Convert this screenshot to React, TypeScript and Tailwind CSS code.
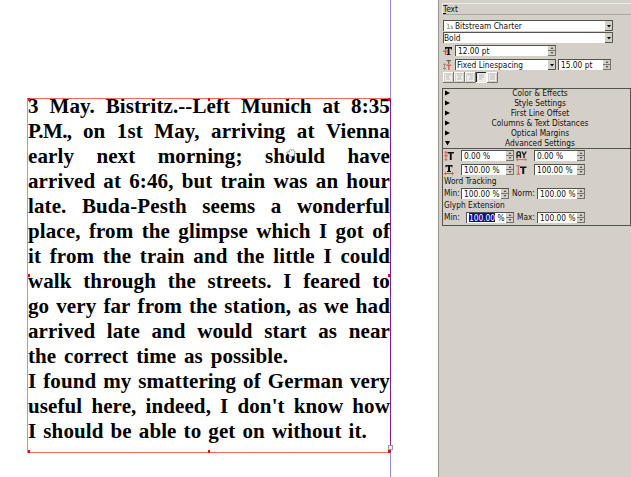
import React from "react";

const lines: [string, number][] = [
  ["3 May. Bistritz.--Left Munich at 8:35", 362],
  ["P.M., on 1st May, arriving at Vienna", 362],
  ["early next morning; should have", 362],
  ["arrived at 6:46, but train was an hour", 362],
  ["late. Buda-Pesth seems a wonderful", 362],
  ["place, from the glimpse which I got of", 362],
  ["it from the train and the little I could", 362],
  ["walk through the streets. I feared to", 362],
  ["go very far from the station, as we had", 362],
  ["arrived late and would start as near", 362],
  ["the correct time as possible.", 260],
  ["I found my smattering of German very", 362],
  ["useful here, indeed, I don't know how", 362],
  ["I should be able to get on without it.", 339],
];

const sections = [
  "Color & Effects",
  "Style Settings",
  "First Line Offset",
  "Columns & Text Distances",
  "Optical Margins",
  "Advanced Settings",
];

function Handle({ className }: { className: string }) {
  return <i className={`absolute h-[3px] w-[2px] bg-[#f00] ${className}`} />;
}

function Spin({ value, className = "", selected = false }: { value: string; className?: string; selected?: boolean }) {
  return (
    <div className={`flex h-[11px] shrink-0 border-t border-l border-[#55534f] bg-white leading-[10px] ${className}`}>
      <span className="w-0 grow pl-[2px] whitespace-pre">
        {selected ? (
          <>
            <span className="inline-block h-[9px] bg-[#10108a] leading-[10px] text-white">100.00</span> %
          </>
        ) : (
          value
        )}
      </span>
      <svg width="8" height="10" viewBox="0 0 8 10" className="shrink-0">
        <path fill="#d4d0c8" d="M0 0h8v10H0z" />
        <path stroke="#77746e" d="M0 4.5h8M0 9.5h8M7.5 0v10" />
        <path fill="#555" d="M2.5 3h3L4 1zM2.5 6h3L4 8z" />
      </svg>
    </div>
  );
}

function Combo({ children, className = "" }: { children: React.ReactNode; className?: string }) {
  return (
    <div className={`flex h-[11px] shrink-0 border-t border-l border-[#55534f] bg-white leading-[10px] ${className}`}>
      <span className="flex grow whitespace-pre">{children}</span>
      <svg width="8" height="10" viewBox="0 0 8 10" className="shrink-0">
        <path fill="#d4d0c8" d="M0 0h8v10H0z" />
        <path stroke="#55534f" fill="none" d="M0 9.5h7.5V0" />
        <path fill="#000" d="M2 4h4L4 6.5z" />
      </svg>
    </div>
  );
}

const T = "M0 0h7v2.4H6L5.5 1.4H4.4V7h.9v1H1.8V7h.9V1.4H1.5L1 2.4H0z";

function FontSizeIcon() {
  return (
    <svg width="10" height="10" viewBox="0 0 10 10">
      <path d={T} transform="translate(2 1)" fill="#111" />
      <path d="M0 4.5h5v1.2H3.2V9H1.9V5.7H0z" fill="#e04a3c" />
    </svg>
  );
}

function LineSpacingIcon() {
  return (
    <svg width="10" height="10" viewBox="0 0 10 10">
      <path d="M3.5.7H8M5.8.7V4" stroke="#555" fill="none" />
      <path d="M3.5 5.2H8M5.8 5.2V10" stroke="#e04a3c" strokeWidth="1.2" fill="none" />
      <path d="M1.5 4v5M0 5.3 1.5 3.6 3 5.3M0 8l1.5 1.6L3 8" stroke="#777" strokeWidth=".7" fill="none" />
    </svg>
  );
}

function BaselineIcon() {
  return (
    <svg width="10" height="10" viewBox="0 0 10 10">
      <path d="M3.5 1H10v1.6H7.7V9H5.8V2.6H3.5z" fill="#111" />
      <path d="M0 4.8h4M2 .5v9M.7 2 2 .5 3.3 2M.7 8 2 9.5 3.3 8" stroke="#e04a3c" strokeWidth=".9" fill="none" />
    </svg>
  );
}

function WidthIcon() {
  return (
    <svg width="10" height="10" viewBox="0 0 10 10">
      <path d="M1.5 0h7v2.2h-1v-.7H6V6h1v1H3V6h1V1.5H2.5v.7h-1z" fill="#111" />
      <path d="M.5 8.5h9M2 7.2.6 8.5 2 9.8M8 7.2l1.4 1.3L8 9.8" stroke="#e04a3c" strokeWidth=".9" fill="none" />
    </svg>
  );
}

function TrackingIcon() {
  return (
    <svg width="11" height="10" viewBox="0 0 11 10">
      <path d="M1 7V2.2Q1 .7 2.7.7t1.7 1.5V7M1 4.5h3.4M6 .5l2 3.7L10.2.5M8 4v3" stroke="#222" strokeWidth="1.4" fill="none" />
      <path d="M.5 8.6h9.8M2 7.3.6 8.6 2 9.9M9 7.3l1.3 1.3L9 9.9" stroke="#e04a3c" strokeWidth=".8" fill="none" />
    </svg>
  );
}

function HeightIcon() {
  return (
    <svg width="11" height="10" viewBox="0 0 11 10">
      <path d="M4 1.5h6.5v1.6H8.2V9H6.3V3.1H4z" fill="#111" />
      <path d="M.5.8h3.6M.5 9.2h3.6M2.3.8v8.4" stroke="#e04a3c" strokeWidth=".9" fill="none" />
    </svg>
  );
}

function AlignButton({ kind, active = false }: { kind: number; active?: boolean }) {
  const paths = [
    "M3 3h5M3 5h3M3 7h4",
    "M3 3h5M4 5h3M3 7h5",
    "M3 3h5M5 5h3M4 7h4",
    "M3 3h5M3 5h5M3 7h3",
    "M3 3h5M3 5h5M3 7h5",
  ];
  return (
    <svg width="11" height="11" viewBox="0 0 11 11">
      <path fill={active ? "#e9e7e3" : "#d4d0c8"} d="M0 0h11v11H0z" />
      <path stroke={active ? "#222" : "#fff"} fill="none" d="M.5 11V.5H11" />
      <path stroke={active ? "#fff" : "#77746e"} fill="none" d="M10.5 0v10.5H0" />
      <path fill="#efeeeb" d="M2 2h7v7H2z" />
      <path d={paths[kind]} stroke="#aaa9a5" strokeWidth=".8" />
    </svg>
  );
}

export default function App() {
  return (
    <div className="flex h-[477px] w-[631px] overflow-hidden bg-white">
      <main className="relative w-[438px] shrink-0 pt-[94px] pl-[28px]">
        <article className="font-['Liberation_Serif',serif] text-[21px] leading-[25px] font-bold tracking-[0.1px] text-black">
          {lines.map(([line, width]) => (
            <p key={line} className="flex h-[25px] justify-between whitespace-nowrap" style={{ width }}>
              {line.split(" ").map((w, i) => (
                <span key={i} className={w === "P.M.," ? "tracking-[-0.6px]" : ""}>{w}</span>
              ))}
            </p>
          ))}
        </article>
        <i className="absolute top-0 left-[390px] h-full w-px bg-[#8c8cf5]" />
        <div className="absolute top-[98px] left-[27px] h-[355px] w-[364px] border border-[#ff6464] border-r-[#7c2090] border-l-[#e08a8a]">
          <Handle className="top-[-1px] left-0" />
          <Handle className="top-[-1px] left-[180px]" />
          <Handle className="top-[-1px] right-0" />
          <Handle className="top-[175px] left-0" />
          <Handle className="top-[175px] right-0" />
          <Handle className="bottom-[-1px] left-0" />
          <Handle className="bottom-[-1px] left-[180px]" />
          <Handle className="right-0 bottom-[-1px]" />
        </div>
        <i className="absolute top-[445px] left-[388px] size-[5px] border border-[#999] bg-[#eee]" />
        <svg className="absolute top-[148px] left-[286px]" width="10" height="10" viewBox="0 0 10 10">
          <path d="M3 7 1 4.5 2 3.5l1 1V2.5l1.5-1 1 .5L7 1.6l1 .8.8 1V6L7.5 8.5h-3z" fill="#fff" stroke="#444" strokeWidth=".8" strokeDasharray="1.5 .6" />
        </svg>
      </main>

      <aside className="flex w-[193px] shrink-0 flex-col border-l border-[#98958f] bg-[#d4d0c8] pl-[3px] font-['DejaVu_Sans_Condensed','DejaVu_Sans',sans-serif] text-[8.3px] text-[#111]">
        <header className="mt-[3px] h-[12px] border-t border-b border-l border-[#eeece8] border-b-[#aaa7a0] leading-[11px]">
          <span className="underline decoration-[0.5px] underline-offset-1">T</span>ext
        </header>

        <section className="flex h-[73px] flex-col pt-[5px] pl-px">
          <Combo className="w-[170px]">
            <svg width="11" height="10" viewBox="0 0 11 10">
              <path d="M3 3h1.3v4.5M3 7.5h3M8.5 5H7v1.2h1.5v1.5H6.7" stroke="#888" strokeWidth=".8" fill="none" />
            </svg>
            Bitstream Charter
          </Combo>
          <Combo className="mt-px w-[170px]">Bold</Combo>
          <div className="mt-[2px] flex h-[11px] items-center gap-[2px]">
            <FontSizeIcon />
            <Spin value="12.00 pt" className="w-[101px]" />
          </div>
          <div className="mt-[3px] flex h-[11px] items-center gap-[2px]">
            <LineSpacingIcon />
            <Combo className="w-[101px]"><span className="pl-px">Fixed Linespacing</span></Combo>
            <Spin value="15.00 pt" className="w-[53px]" />
          </div>
          <div className="mt-[2px] flex">
            {[0, 1, 2, 3, 4].map((k) => <AlignButton key={k} kind={k} active={k === 3} />)}
          </div>
        </section>

        <section className="h-[138px] w-[189px] border border-[#55534f]">
          <div className="mt-[-1px]">
            {sections.map((name, i) => (
              <h3 key={name} className="flex h-[10px] items-center pl-[2px] leading-[10px] font-normal">
                <svg width="5" height="6" viewBox="0 0 5 6" className="shrink-0">
                  <path d={i === 5 ? "M0 1h5L2.5 5.5z" : "M0 .5 5 3 0 5.5z"} fill="#000" />
                </svg>
                <span className="grow text-center">{name}</span>
              </h3>
            ))}
          </div>
          <div className="flex flex-col border-t border-[#55534f] pl-px">
            <div className="mt-px flex items-center">
              <BaselineIcon />
              <Spin value="0.00 %" className="ml-[7px] w-[53px]" />
              <span className="ml-[2px] flex w-[18px]"><TrackingIcon /></span>
              <Spin value="0.00 %" className="w-[51px]" />
            </div>
            <div className="mt-[3px] flex items-center">
              <WidthIcon />
              <Spin value="100.00 %" className="ml-[7px] w-[53px]" />
              <span className="ml-[2px] flex w-[18px]"><HeightIcon /></span>
              <Spin value="100.00 %" className="w-[51px]" />
            </div>
            <p className="h-[12px] leading-[12px]">Word Tracking</p>
            <div className="mt-px flex items-center leading-[11px]">
              <span className="w-[17px]">Min:</span>
              <Spin value="100.00 %" className="w-[48px]" />
              <span className="ml-[3px] w-[25px]">Norm:</span>
              <Spin value="100.00 %" className="w-[48px]" />
            </div>
            <p className="h-[12px] pt-px leading-[11px]">Glyph Extension</p>
            <div className="mt-px flex items-center leading-[11px]">
              <span className="w-[22px]">Min:</span>
              <Spin value="100.00 %" selected className="w-[48px]" />
              <span className="ml-[3px] w-[20px]">Max:</span>
              <Spin value="100.00 %" className="w-[48px]" />
            </div>
          </div>
        </section>
      </aside>
    </div>
  );
}
